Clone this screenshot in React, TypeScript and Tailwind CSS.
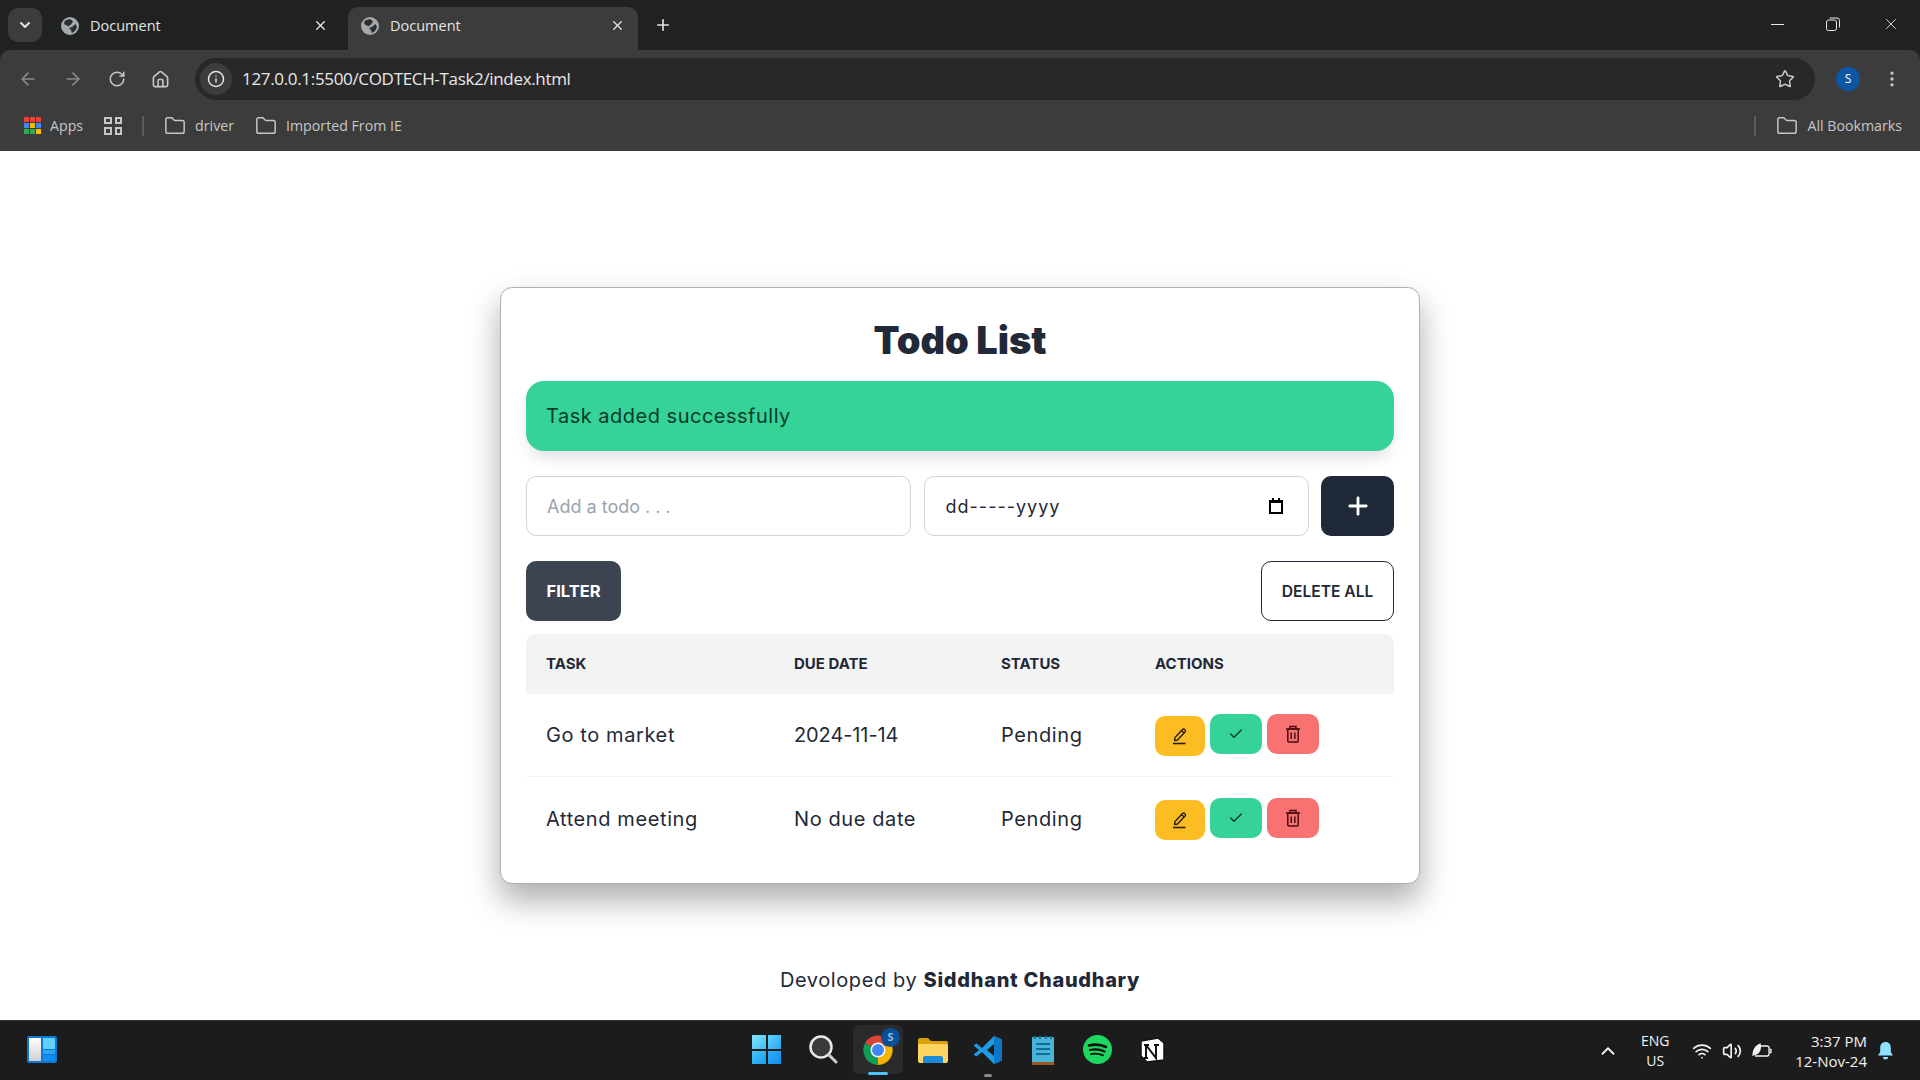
import { ArrowLeft, ArrowRight, Check, ChevronDown, ChevronUp, Folder, Home, Info, MoreVertical, Plus, RotateCw, Star, Volume2, Wifi, X } from 'lucide-react'

function Globe() {
  return (
    <svg width="18" height="18" viewBox="0 0 18 18" className="shrink-0">
      <circle cx="9" cy="9" r="9" fill="#a3a8ad" />
      <path d="M9 2 4 3.500 3 7l3 1.500 1 1 3-2 2-3z" fill="#2c2e2e" />
      <path d="M14.500 7 16 10l-2 4-3 2-1-3-2-2 3-1z" fill="#2c2e2e" />
    </svg>
  )
}

function Tab({ active }: { active?: boolean }) {
  return (
    <div className={`h-[43px] flex items-center rounded-t-[10px] pl-[13px] pr-[13px] pb-[6px] ${active ? 'w-[290px] bg-[#3c3c3c]' : 'w-[293px] bg-transparent'}`}>
      <Globe />
      <span className="ml-[11px] flex-1 text-[14.5px] text-[#e3e3e3]">Document</span>
      <X size={15} strokeWidth={2.2} className="text-[#e3e3e3]" />
    </div>
  )
}

function AppsIcon() {
  const colors = ['#ea4335', '#ea4335', '#ea4335', '#4285f4', '#fbbc04', '#4285f4', '#34a853', '#34a853', '#fbbc04']
  return (
    <div className="grid grid-cols-3 gap-[1px] w-[17px] h-[17px]">
      {colors.map((c, i) => (
        <span key={i} style={{ backgroundColor: c }} />
      ))}
    </div>
  )
}

function TabGroupsIcon() {
  return (
    <div className="grid grid-cols-2 gap-[3px] w-[18px] h-[18px]">
      {[0, 1, 2, 3].map((i) => (
        <span key={i} className="border-2 border-[#c7c7c7]" />
      ))}
    </div>
  )
}

function Bookmark({ label }: { label: string }) {
  return (
    <div className="flex items-center gap-[9px]">
      <Folder size={22} strokeWidth={1.6} className="text-[#c7c7c7]" />
      <span className="text-[14.2px] text-[#c7c7c7]">{label}</span>
    </div>
  )
}

function BrowserChrome() {
  return (
    <div className="shrink-0 bg-[#202221]">
      <div className="h-[50px] flex items-end">
        <div className="ml-[8px] mb-[8px] w-[34px] h-[34px] rounded-[10px] bg-[#3c3c3c] flex items-center justify-center">
          <ChevronDown size={16} strokeWidth={3} className="text-[#e3e3e3]" />
        </div>
        <div className="ml-[6px] mr-[7px]"><Tab /></div>
        <Tab active />
        <Plus size={18} strokeWidth={2.2} className="ml-[16px] mb-[16px] text-[#e3e3e3]" />
        <div className="ml-auto flex items-center gap-[42px] pr-[20px] mb-[17px] text-[#e8e8e8]">
          <div className="w-[13px] h-[1px] bg-[#e8e8e8]" />
          <svg width="14" height="14" viewBox="0 0 14 14" fill="none" stroke="#e8e8e8">
            <rect x="0.5" y="3" width="10" height="10.5" rx="2" />
            <path d="M3.5 1h7.5a2.500 2.500 0 0 1 2.500 2.500v7" />
          </svg>
          <X size={18} strokeWidth={1.2} />
        </div>
      </div>
      <div className="bg-[#3c3c3c] rounded-t-[10px] h-[101px]">
        <div className="h-[50px] flex items-center pt-[8px] text-[#c7c7c7]">
          <div className="w-[195px] flex items-center pl-[18px] gap-[25px]">
            <ArrowLeft size={20} className="text-[#8a8a8a]" />
            <ArrowRight size={20} className="text-[#8a8a8a]" />
            <RotateCw size={18} />
            <Home size={19} />
          </div>
          <div className="w-[1620px] h-[42px] rounded-full bg-[#282828] flex items-center pl-[5px] pr-[20px]">
            <div className="w-[32px] h-[32px] rounded-full bg-[#3c3c3c] flex items-center justify-center">
              <Info size={18} className="text-[#e3e3e3]" />
            </div>
            <span className="ml-[10px] flex-1 text-[17px] tracking-[-0.33px] text-[#e8e8e8]">127.0.0.1:5500/CODTECH-Task2/index.html</span>
            <Star size={20} strokeWidth={1.8} />
          </div>
          <div className="ml-[21px] w-[24px] h-[24px] rounded-full bg-[#0b57a4] flex items-center justify-center text-[12px] text-white">S</div>
          <MoreVertical size={20} className="ml-[22px]" />
        </div>
        <div className="h-[51px] flex items-center pl-[24px] pr-[18px]">
          <AppsIcon />
          <span className="ml-[9px] text-[14.2px] text-[#c7c7c7]">Apps</span>
          <div className="ml-[21px]"><TabGroupsIcon /></div>
          <div className="ml-[20px] mr-[20px] w-[2px] h-[20px] bg-[#5c5c5c]" />
          <Bookmark label="driver" />
          <div className="ml-[21px]"><Bookmark label="Imported From IE" /></div>
          <div className="ml-auto w-[2px] h-[20px] bg-[#5c5c5c] mr-[20px]" />
          <Bookmark label="All Bookmarks" />
        </div>
      </div>
    </div>
  )
}

function PencilIcon() {
  return (
    <svg width="16" height="18" viewBox="0 0 16 18" fill="none" stroke="#2a2008" strokeWidth="1.400" strokeLinejoin="round">
      <path d="M2.500 13.500 3 10.500 10.500 2.500a1.500 1.500 0 0 1 2.200 0l.3.300a1.500 1.500 0 0 1 0 2.200L5.500 13z" />
      <path d="M9.500 3.500 12 6" />
      <path d="M1 16.500h12.500" strokeWidth="1.600" />
    </svg>
  )
}

function TrashIcon() {
  return (
    <svg width="16" height="18" viewBox="0 0 16 18" fill="none" stroke="#4a0d12" strokeWidth="1.500">
      <path d="M1 4h14" />
      <path d="M5 4V1.500h6V4" />
      <rect x="2.800" y="4" width="10.400" height="13" rx="1" />
      <path d="M6.200 7.500v6.500M9.800 7.500v6.500" />
    </svg>
  )
}

function ActionButtons() {
  return (
    <div className="flex gap-[5px] items-start">
      <button className="mt-[2px] w-[50px] h-[40px] rounded-[10px] bg-[#fbbd23] flex items-center justify-center">
        <PencilIcon />
      </button>
      <button className="w-[52px] h-[40px] rounded-[10px] bg-[#36d399] flex items-center justify-center text-[#0f3527]">
        <Check size={16} strokeWidth={2} />
      </button>
      <button className="w-[52px] h-[40px] rounded-[10px] bg-[#f87272] flex items-center justify-center">
        <TrashIcon />
      </button>
    </div>
  )
}

function Row({ task, due, last }: { task: string; due: string; last?: boolean }) {
  return (
    <div className={`grid grid-cols-[248px_207px_154px_1fr] items-center h-[83px] pl-[20px] text-[20px] tracking-[0.6px] text-[#1f2937] ${last ? '' : 'border-b border-[#f0f0f0]'}`}>
      <span>{task}</span>
      {/* the digits run wider than the reference's, so no extra spacing on the date */}
      <span className={due.startsWith('2') ? 'tracking-[-0.1px]' : ''}>{due}</span>
      <span>Pending</span>
      <ActionButtons />
    </div>
  )
}

function TodoCard() {
  return (
    <div className="w-[920px] h-[597px] rounded-[12px] border border-[#b0b0b0] bg-white shadow-[0_16px_32px_rgba(0,0,0,0.33)] px-[25px]">
      <h1 className="h-[93px] pt-[12px] flex items-center justify-center text-[38px] font-black text-[#1f2937]">Todo List</h1>
      <div className="h-[70px] rounded-[18px] bg-[#36d399] shadow-[0_10px_15px_-3px_rgba(0,0,0,0.12)] flex items-center px-[20px] text-[20px] tracking-[0.5px] text-[#063b2a]">
        Task added successfully
      </div>
      <div className="mt-[25px] flex gap-[13px]">
        <div className="w-[385px] h-[60px] rounded-[10px] border border-[#d1d5db] flex items-center px-[20px] text-[18px] text-[#9ca3af]">
          Add a todo . . .
        </div>
        <div className="w-[386px] h-[60px] rounded-[10px] border border-[#d1d5db] flex items-center pl-[21px] pr-[25px] text-[18px] tracking-[1px] text-[#1f2937]">
          <span className="flex-1">dd-----yyyy</span>
          <svg width="14" height="16" viewBox="0 0 14 16" fill="none" stroke="#000" strokeWidth="2">
            <rect x="1" y="3" width="12" height="12" />
            <path d="M1 3.500h12" strokeWidth="3" />
            <path d="M4 0v2M10 0v2" />
          </svg>
        </div>
        <button className="ml-[-1px] w-[73px] h-[60px] rounded-[10px] bg-[#1f2937] flex items-center justify-center text-white">
          <Plus size={28} strokeWidth={2.4} />
        </button>
      </div>
      <div className="mt-[25px] flex justify-between">
        <button className="w-[95px] h-[60px] pt-[1px] rounded-[10px] bg-[#3d4451] text-[16.5px] font-bold text-white">FILTER</button>
        <button className="w-[133px] h-[60px] pt-[1px] rounded-[10px] border border-[#1f2937] text-[15.6px] font-semibold text-[#1f2937]">DELETE ALL</button>
      </div>
      <div className="mt-[13px]">
        <div className="grid grid-cols-[248px_207px_154px_1fr] items-center h-[60px] pl-[20px] rounded-t-[10px] bg-[#f3f3f3] text-[15px] font-bold text-[#1f2937]">
          <span>TASK</span>
          <span>DUE DATE</span>
          <span>STATUS</span>
          <span>ACTIONS</span>
        </div>
        <Row task="Go to market" due="2024-11-14" />
        <Row task="Attend meeting" due="No due date" last />
      </div>
    </div>
  )
}

function WindowsLogo() {
  return (
    <div className="grid grid-cols-2 gap-[2px] w-[29px] h-[29px]">
      <span className="bg-gradient-to-br from-[#7fe4ff] to-[#3bbcf5]" />
      <span className="bg-gradient-to-br from-[#5fd4ff] to-[#25a8f0]" />
      <span className="bg-gradient-to-br from-[#45c5fb] to-[#1d9cf0]" />
      <span className="bg-gradient-to-br from-[#2fb0f8] to-[#0f8ceb]" />
    </div>
  )
}

function ChromeIcon() {
  return (
    <div className="relative w-[50px] h-[49px] rounded-[6px] bg-[#2a2a2a] flex items-center justify-center">
      <svg width="30" height="30" viewBox="0 0 30 30">
        <path d="M15 15 2 8A15 15 0 0 1 28 8z" fill="#db4437" />
        <path d="M15 15 28 8A15 15 0 0 1 15 30z" fill="#f4b400" />
        <path d="M15 15 15 30A15 15 0 0 1 2 8z" fill="#0f9d58" />
        <circle cx="15" cy="15" r="7.500" fill="#fff" />
        <circle cx="15" cy="15" r="6" fill="#4285f4" />
      </svg>
      <div className="absolute top-[3px] right-[3px] w-[19px] h-[19px] rounded-full bg-[#0b4f94] flex items-center justify-center text-[11px] font-bold text-[#8fbdf0]">S</div>
      <div className="absolute bottom-[-1px] left-[15px] w-[20px] h-[3px] rounded-full bg-[#4cc2ff]" />
    </div>
  )
}

function FilesIcon() {
  return (
    <svg width="30" height="26" viewBox="0 0 30 26">
      <path d="M0 3a2 2 0 0 1 2-2h8l3 3h15a2 2 0 0 1 2 2v4H0z" fill="#d9a307" />
      <path d="M0 7h28a2 2 0 0 1 2 2v15a2 2 0 0 1-2 2H2a2 2 0 0 1-2-2z" fill="#fcd462" />
      <path d="M5 26v-5a2 2 0 0 1 2-2h16a2 2 0 0 1 2 2v5z" fill="#1f8ad8" />
    </svg>
  )
}

function VsCodeIcon() {
  return (
    <svg width="30" height="30" viewBox="0 0 30 30">
      <path d="M21 1 9 13 3.500 8.500 0.500 10.500 6 15 0.500 19.500 3.500 21.500 9 17 21 29 29 25.500V4.500z" fill="#1e9be4" />
      <path d="M21 1 29 4.500V25.500L21 29z" fill="#0a78c7" />
      <path d="M21 9 14 15 21 21z" fill="#1c1c1c" />
    </svg>
  )
}

function NotepadIcon() {
  return (
    <svg width="22" height="30" viewBox="0 0 22 30">
      <rect y="2" width="22" height="28" rx="1" fill="#4ab3d8" />
      <rect y="27" width="22" height="3" fill="#a0571f" />
      <path d="M4 9h14M4 14h14M4 19h14" stroke="#0f6f96" strokeWidth="2" />
      <path d="M3 1v3M8 1v3M14 1v3M19 1v3" stroke="#0f6f96" strokeWidth="2" />
    </svg>
  )
}

function SpotifyIcon() {
  return (
    <svg width="29" height="29" viewBox="0 0 29 29" fill="none">
      <circle cx="14.500" cy="14.500" r="14.500" fill="#1ed760" />
      <path d="M6 10.500c6-1.500 12-1 17 1.500" stroke="#111" strokeWidth="2.600" strokeLinecap="round" />
      <path d="M7 15c5-1.200 10-.8 14.500 1.500" stroke="#111" strokeWidth="2.200" strokeLinecap="round" />
      <path d="M8 19.200c4.500-1 8.500-.6 12 1.200" stroke="#111" strokeWidth="1.800" strokeLinecap="round" />
    </svg>
  )
}

function NotionIcon() {
  return (
    <svg width="25" height="26" viewBox="0 0 25 26">
      <path d="M1 4 18 1l6 5v17l-17 2-6-6z" fill="#fff" stroke="#111" strokeWidth="1.500" />
      <path d="M6 8v13M6 8l10 13V8M4 8h5M14 8h5M4 21h4" stroke="#111" strokeWidth="2" fill="none" />
    </svg>
  )
}

function Taskbar() {
  return (
    <div className="shrink-0 h-[60px] bg-[#1c1c1c] border-t border-[#333] flex items-center relative">
      <div className="ml-[27px] mb-[2px] w-[30px] h-[27px] rounded-[2px] bg-[#0a78d4] p-[2px] flex gap-[2px]">
        <div className="w-[12px] bg-gradient-to-b from-white to-[#d0d0d0]" />
        <div className="flex-1 flex flex-col gap-[1px]">
          <div className="flex-[3] bg-[#62d0ff]" />
          <div className="flex-1 bg-[#2aa8f8]" />
          <div className="flex-[1.500] bg-[#0d8ff0]" />
        </div>
      </div>
      <div className="ml-[695px] mb-[2px] flex items-center">
        <WindowsLogo />
        <svg width="29" height="29" viewBox="0 0 29 29" fill="none" className="ml-[28px]">
          <circle cx="12" cy="12" r="10.500" fill="#3a3a3a" stroke="#e8e8e8" strokeWidth="2.500" />
          <path d="M20 20l7 7" stroke="#cfcfcf" strokeWidth="3" strokeLinecap="round" />
        </svg>
        <div className="ml-[15px]"><ChromeIcon /></div>
        <div className="ml-[15px]"><FilesIcon /></div>
        <div className="ml-[25px] relative">
          <VsCodeIcon />
          <div className="absolute bottom-[-12px] left-[11px] w-[8px] h-[3px] rounded-full bg-[#8a8a8a]" />
        </div>
        <div className="ml-[29px]"><NotepadIcon /></div>
        <div className="ml-[29px]"><SpotifyIcon /></div>
        <div className="ml-[28px]"><NotionIcon /></div>
      </div>
      <div className="ml-auto flex items-center pr-[26px] text-[#f2f2f2]">
        <ChevronUp size={22} strokeWidth={2} />
        <div className="ml-[16px] w-[40px] text-center text-[14px] leading-[20px]">
          <div>ENG</div>
          <div>US</div>
        </div>
        <Wifi size={20} className="ml-[17px]" />
        <Volume2 size={20} className="ml-[10px]" />
        <svg width="20" height="18" viewBox="0 0 20 18" fill="none" stroke="#f2f2f2" strokeWidth="1.300" className="ml-[10px]">
          <path d="M8 4h7a2 2 0 0 1 2 2v6a2 2 0 0 1-2 2H3" />
          <path d="M17.500 7.500h1.500v3h-1.500" />
          <path d="M1 13c0-5 3-9 7-11 1 4 0 9-4 10z" fill="#f2f2f2" />
        </svg>
        <div className="ml-[23px] text-right text-[15px] leading-[20px]">
          <div>3:37 PM</div>
          <div>12-Nov-24</div>
        </div>
        <svg width="17" height="20" viewBox="0 0 17 20" className="ml-[10px]" fill="#8fe3ff">
          <path d="M8.500 1C5 1 3.200 3.500 3.200 7v4L1 14.500h15L13.800 11V7C13.800 3.500 12 1 8.500 1z" />
          <path d="M6 16h5a2.500 2.500 0 0 1-5 0z" />
        </svg>
      </div>
    </div>
  )
}

export default function App() {
  return (
    <div className="h-screen w-full flex flex-col overflow-hidden bg-white font-['Inter','Liberation_Sans',sans-serif]">
      <div className="font-['Open_Sans','Liberation_Sans',sans-serif]">
        <BrowserChrome />
      </div>
      <div className="flex-1 flex flex-col items-center pt-[136px]">
        <TodoCard />
        <p className="mt-[81px] text-[20px] tracking-[0.6px] text-[#1f2937]">
          Devoloped by <span className="font-extrabold tracking-[0.7px]">Siddhant Chaudhary</span>
        </p>
      </div>
      <div className="font-['Open_Sans','Liberation_Sans',sans-serif]">
        <Taskbar />
      </div>
    </div>
  )
}
